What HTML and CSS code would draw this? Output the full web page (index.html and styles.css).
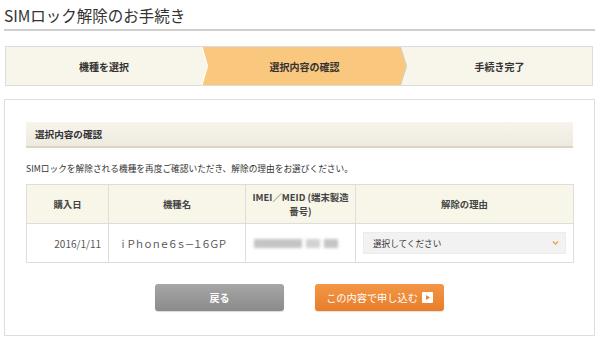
FILE: index.html
```html
<!DOCTYPE html>
<html lang="ja">
<head>
<meta charset="utf-8">
<title>SIMロック解除のお手続き</title>
<link rel="stylesheet" href="styles.css">
</head>
<body>
<div class="page">
  <h1 class="title">SIMロック解除のお手続き</h1>

  <ol class="steps">
    <li class="step step-first">機種を選択</li>
    <li class="step step-current">
      <svg class="step-bg" viewBox="0 0 205 38" preserveAspectRatio="none" aria-hidden="true">
        <polygon points="0,0 199,0 205,19 199,38 0,38 5,19" fill="#f9c77e"/>
        <polyline points="0,0 5.5,19 0,38" fill="none" stroke="#ffffff" stroke-width="1.2"/>
        <polyline points="198.5,0 204.5,19 198.5,38" fill="none" stroke="#d2d2d2" stroke-width="1"/>
      </svg>
      <span class="step-label">選択内容の確認</span>
    </li>
    <li class="step">手続き完了</li>
  </ol>

  <section class="panel">
    <h2 class="panel-head">選択内容の確認</h2>
    <p class="lead">SIMロックを解除される機種を再度ご確認いただき、解除の理由をお選びください。</p>

    <table class="confirm">
      <thead>
        <tr>
          <th class="col-date">購入日</th>
          <th class="col-model">機種名</th>
          <th class="col-imei">IMEI／MEID (端末製造<br>番号)</th>
          <th class="col-reason">解除の理由</th>
        </tr>
      </thead>
      <tbody>
        <tr>
          <td class="cell-date">2016/1/11</td>
          <td class="cell-model">ｉＰｈｏｎｅ６ｓ－１６ＧＰ</td>
          <td class="cell-imei">
            <div class="masked">
              <span class="blob blob-a"></span>
              <span class="blob blob-b"></span>
              <span class="blob blob-c"></span>
            </div>
          </td>
          <td class="cell-reason">
            <div class="select">
              <span class="select-text">選択してください</span>
              <svg class="select-arrow" viewBox="0 0 8 6" aria-hidden="true">
                <polyline points="1,1.2 4,4.2 7,1.2" fill="none" stroke="#f0a352" stroke-width="1.6"/>
              </svg>
            </div>
          </td>
        </tr>
      </tbody>
    </table>

    <div class="actions">
      <button class="btn btn-back" type="button">戻る</button>
      <button class="btn btn-submit" type="button">
        <span>この内容で申し込む</span>
        <span class="btn-icon">
          <svg viewBox="0 0 11 11" aria-hidden="true">
            <rect x="0" y="0" width="11" height="11" rx="1" fill="#ffffff"/>
            <polygon points="4,3 8,5.5 4,8" fill="#e9832f"/>
          </svg>
        </span>
      </button>
    </div>
  </section>
</div>
</body>
</html>
```

FILE: styles.css
```css
* {
  box-sizing: border-box;
}

html, body {
  margin: 0;
  padding: 0;
  background: #ffffff;
}

body {
  font-family: "Noto Sans CJK JP", "Noto Sans", sans-serif;
  color: #333333;
}

.page {
  padding: 0 5px 0 4px;
}

.title {
  margin: 3px 0 0;
  font-size: 15.5px;
  line-height: 24px;
  font-weight: 400;
  color: #333333;
  padding-bottom: 2px;
  border-bottom: 2px solid #cfcfcf;
}

/* Steps */
.steps {
  list-style: none;
  margin: 15px 2px 0 1px;
  padding: 0;
  display: flex;
  height: 40px;
  border: 1px solid #dcdcdc;
  background: #f8f6ea;
}

.step {
  flex: 1;
  display: flex;
  align-items: center;
  justify-content: center;
  font-size: 10px;
  font-weight: 700;
  color: #333333;
}

.step-first {
  flex: 0 0 196px;
}

.step-current {
  flex: 0 0 205px;
  position: relative;
}

.step-bg {
  position: absolute;
  inset: 0;
  width: 100%;
  height: 100%;
}

.step-label {
  position: relative;
}

/* Panel */
.panel {
  margin-top: 13px;
  border: 1px solid #dedede;
  padding: 22px 21px 24px;
}

.panel-head {
  margin: 0;
  height: 26px;
  padding: 0 9px;
  display: flex;
  align-items: center;
  font-size: 9.6px;
  font-weight: 700;
  color: #333333;
  background: linear-gradient(#f6f4ec, #eeeadf);
  border-bottom: 2px solid #ddd5c3;
}

.lead {
  margin: 14px 0 8px;
  font-size: 8.7px;
  line-height: 14px;
  color: #333333;
  white-space: nowrap;
}

/* Table */
.confirm {
  width: 547px;
  border-collapse: collapse;
  table-layout: fixed;
}

.confirm th,
.confirm td {
  border: 1px solid #dddddd;
  height: 39px;
  padding: 0;
}

.confirm th {
  background: #f8f6e8;
  font-size: 9.4px;
  font-weight: 700;
  color: #444444;
  line-height: 14px;
  text-align: center;
}

.col-date { width: 82px; }
.col-model { width: 137px; }
.col-imei { width: 110px; }
.col-reason { width: 218px; }

.cell-date {
  text-align: right;
  padding-right: 7px !important;
  font-size: 10px;
  color: #555555;
}

.cell-model {
  padding-left: 9px !important;
  font-size: 10px;
  letter-spacing: -1.7px;
  color: #555555;
}

.cell-imei {
  padding: 0 8px !important;
}

.masked {
  display: flex;
  align-items: center;
  gap: 4px;
  height: 12px;
}

.blob {
  display: block;
  height: 9px;
  background: #c4c4c4;
  filter: blur(1.6px);
}

.blob-a { width: 48px; }
.blob-b { width: 14px; background: #d2d2d2; }
.blob-c { width: 14px; }

.cell-reason {
  padding: 0 7px !important;
}

.select {
  height: 22px;
  background: #f2f2f2;
  border: 1px solid #ececec;
  display: flex;
  align-items: center;
  justify-content: space-between;
  padding: 0 6px 0 9px;
}

.select-text {
  font-size: 8.6px;
  color: #333333;
}

.select-arrow {
  width: 7px;
  height: 6px;
}

/* Buttons */
.actions {
  margin-top: 21px;
  display: flex;
  justify-content: center;
  gap: 31px;
}

.btn {
  width: 129px;
  height: 27px;
  border: none;
  border-radius: 3px;
  font-family: "Noto Sans CJK JP", "Noto Sans", sans-serif;
  color: #ffffff;
  display: flex;
  align-items: center;
  justify-content: center;
  padding: 0;
  cursor: pointer;
}

.btn-back {
  background: linear-gradient(#a6a6a6, #8b8b8b);
  font-size: 10px;
  font-weight: 700;
  box-shadow: 0 1px 1px rgba(0, 0, 0, 0.15);
}

.btn-submit {
  background: linear-gradient(#f39746, #e77d2a);
  font-size: 10.2px;
  gap: 4px;
  box-shadow: 0 1px 1px rgba(0, 0, 0, 0.12);
}

.btn-icon {
  display: flex;
}

.btn-icon svg {
  width: 11px;
  height: 11px;
}
```
